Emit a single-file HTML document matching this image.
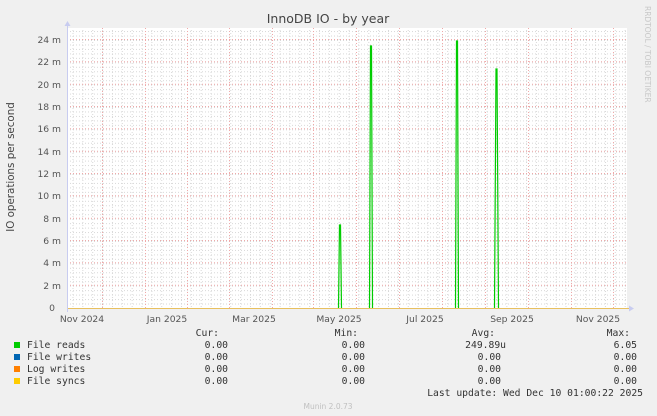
<!DOCTYPE html>
<html><head><meta charset="utf-8"><style>
html,body{margin:0;padding:0;background:#f0f0f0;width:657px;height:416px;overflow:hidden}
svg{display:block}
.t{font-family:"DejaVu Sans","Liberation Sans",sans-serif;fill:#555;font-size:9.2px}
.m{font-family:"DejaVu Sans Mono","Liberation Mono",monospace;fill:#333;font-size:9.7px;white-space:pre}
</style></head><body>
<svg width="657" height="416" xmlns="http://www.w3.org/2000/svg">
<defs>
<pattern id="hg" x="67" y="308" width="560" height="4.4667" patternUnits="userSpaceOnUse">
<line x1="0" y1="0.5" x2="560" y2="0.5" stroke="#d8d8d8" stroke-dasharray="1,2"/>
</pattern>
<pattern id="vg" x="72.5" y="0" width="9.86" height="416" patternUnits="userSpaceOnUse">
<line x1="0.5" y1="0" x2="0.5" y2="416" stroke="#d8d8d8" stroke-dasharray="1,2"/>
</pattern>
</defs>
<rect x="67" y="28" width="560" height="280" fill="#fff"/>
<rect x="67" y="28" width="560" height="280" fill="url(#hg)"/>
<rect x="67" y="28" width="560" height="280" fill="url(#vg)"/>
<g stroke="#f0a8a8" stroke-dasharray="1,2" stroke-width="1">
<line x1="67" y1="39.5" x2="627" y2="39.5"/><line x1="67" y1="61.8" x2="627" y2="61.8"/>
<line x1="67" y1="84.2" x2="627" y2="84.2"/><line x1="67" y1="106.5" x2="627" y2="106.5"/>
<line x1="67" y1="128.8" x2="627" y2="128.8"/><line x1="67" y1="151.2" x2="627" y2="151.2"/>
<line x1="67" y1="173.5" x2="627" y2="173.5"/><line x1="67" y1="195.8" x2="627" y2="195.8"/>
<line x1="67" y1="218.2" x2="627" y2="218.2"/><line x1="67" y1="240.5" x2="627" y2="240.5"/>
<line x1="67" y1="262.8" x2="627" y2="262.8"/><line x1="67" y1="285.2" x2="627" y2="285.2"/>
<line x1="102.5" y1="28" x2="102.5" y2="308"/><line x1="145.5" y1="28" x2="145.5" y2="308"/>
<line x1="187.5" y1="28" x2="187.5" y2="308"/><line x1="229.5" y1="28" x2="229.5" y2="308"/>
<line x1="272.5" y1="28" x2="272.5" y2="308"/><line x1="313.5" y1="28" x2="313.5" y2="308"/>
<line x1="356.5" y1="28" x2="356.5" y2="308"/><line x1="399.5" y1="28" x2="399.5" y2="308"/>
<line x1="442.5" y1="28" x2="442.5" y2="308"/><line x1="485.5" y1="28" x2="485.5" y2="308"/>
<line x1="528.5" y1="28" x2="528.5" y2="308"/><line x1="571.5" y1="28" x2="571.5" y2="308"/>
<line x1="613.5" y1="28" x2="613.5" y2="308"/>
</g>
<g stroke="#00cc00" stroke-width="1.2" fill="none">
<polyline points="338.5,308 339.5,225 340.5,225 341.5,308"/>
<polyline points="369.5,308 370.5,46 371.5,46 372.5,308"/>
<polyline points="455.5,308 456.5,41 457.5,41 458.5,308"/>
<polyline points="494.5,308 496,69 497,69 498.5,308"/>
</g>
<line x1="67" y1="308.5" x2="630" y2="308.5" stroke="#e8c060" stroke-width="1"/>
<line x1="67.5" y1="24" x2="67.5" y2="312" stroke="#c8ccf0" stroke-width="1"/>
<polygon points="64.5,26 67.5,21 70.5,26" fill="#c8ccf0"/>
<polygon points="629,305.5 634,308.5 629,311.5" fill="#c8ccf0"/>
<text x="328" y="23" text-anchor="middle" style="font-family:'DejaVu Sans','Liberation Sans',sans-serif;font-size:12.5px;fill:#444">InnoDB IO - by year</text>
<text transform="translate(14,167) rotate(-90)" text-anchor="middle" style="font-family:'DejaVu Sans','Liberation Sans',sans-serif;font-size:10.3px;fill:#444">IO operations per second</text>
<text transform="translate(645,6) rotate(90)" style="font-family:'DejaVu Sans','Liberation Sans',sans-serif;font-size:7.5px;fill:#c8c8c8">RRDTOOL / TOBI OETIKER</text>
<g class="t" text-anchor="end">
<text x="61" y="43">24 m</text><text x="61" y="65">22 m</text><text x="61" y="88">20 m</text>
<text x="61" y="110">18 m</text><text x="61" y="132">16 m</text><text x="61" y="155">14 m</text>
<text x="61" y="177">12 m</text><text x="61" y="199">10 m</text><text x="61" y="222">8 m</text>
<text x="61" y="244">6 m</text><text x="61" y="266">4 m</text><text x="61" y="289">2 m</text>
<text x="55" y="311">0</text>
</g>
<g class="t" text-anchor="middle">
<text x="82" y="322">Nov 2024</text><text x="167" y="322">Jan 2025</text><text x="254" y="322">Mar 2025</text>
<text x="339" y="322">May 2025</text><text x="425" y="322">Jul 2025</text><text x="512" y="322">Sep 2025</text>
<text x="598" y="322">Nov 2025</text>
</g>
<rect x="14" y="342" width="6" height="6" fill="#00cc00"/>
<rect x="14" y="354" width="6" height="6" fill="#0066b3"/>
<rect x="14" y="366" width="6" height="6" fill="#ff8000"/>
<rect x="14" y="378" width="6" height="6" fill="#ffcc00"/>
<g class="m">
<text x="27" y="348">File reads</text><text x="27" y="360">File writes</text>
<text x="27" y="372">Log writes</text><text x="27" y="384">File syncs</text>
</g>
<g class="m" text-anchor="end">
<text x="219" y="336">Cur:</text><text x="358" y="336">Min:</text><text x="495" y="336">Avg:</text><text x="630" y="336">Max:</text>
<text x="228" y="348">0.00</text><text x="365" y="348">0.00</text><text x="506" y="348">249.89u</text><text x="637" y="348">6.05</text>
<text x="228" y="360">0.00</text><text x="365" y="360">0.00</text><text x="501" y="360">0.00</text><text x="637" y="360">0.00</text>
<text x="228" y="372">0.00</text><text x="365" y="372">0.00</text><text x="501" y="372">0.00</text><text x="637" y="372">0.00</text>
<text x="228" y="384">0.00</text><text x="365" y="384">0.00</text><text x="501" y="384">0.00</text><text x="637" y="384">0.00</text>
<text x="643" y="396">Last update: Wed Dec 10 01:00:22 2025</text>
</g>
<text x="328" y="409" text-anchor="middle" style="font-family:'DejaVu Sans','Liberation Sans',sans-serif;font-size:7.5px;fill:#c0c0c0">Munin 2.0.73</text>
</svg>
</body></html>
